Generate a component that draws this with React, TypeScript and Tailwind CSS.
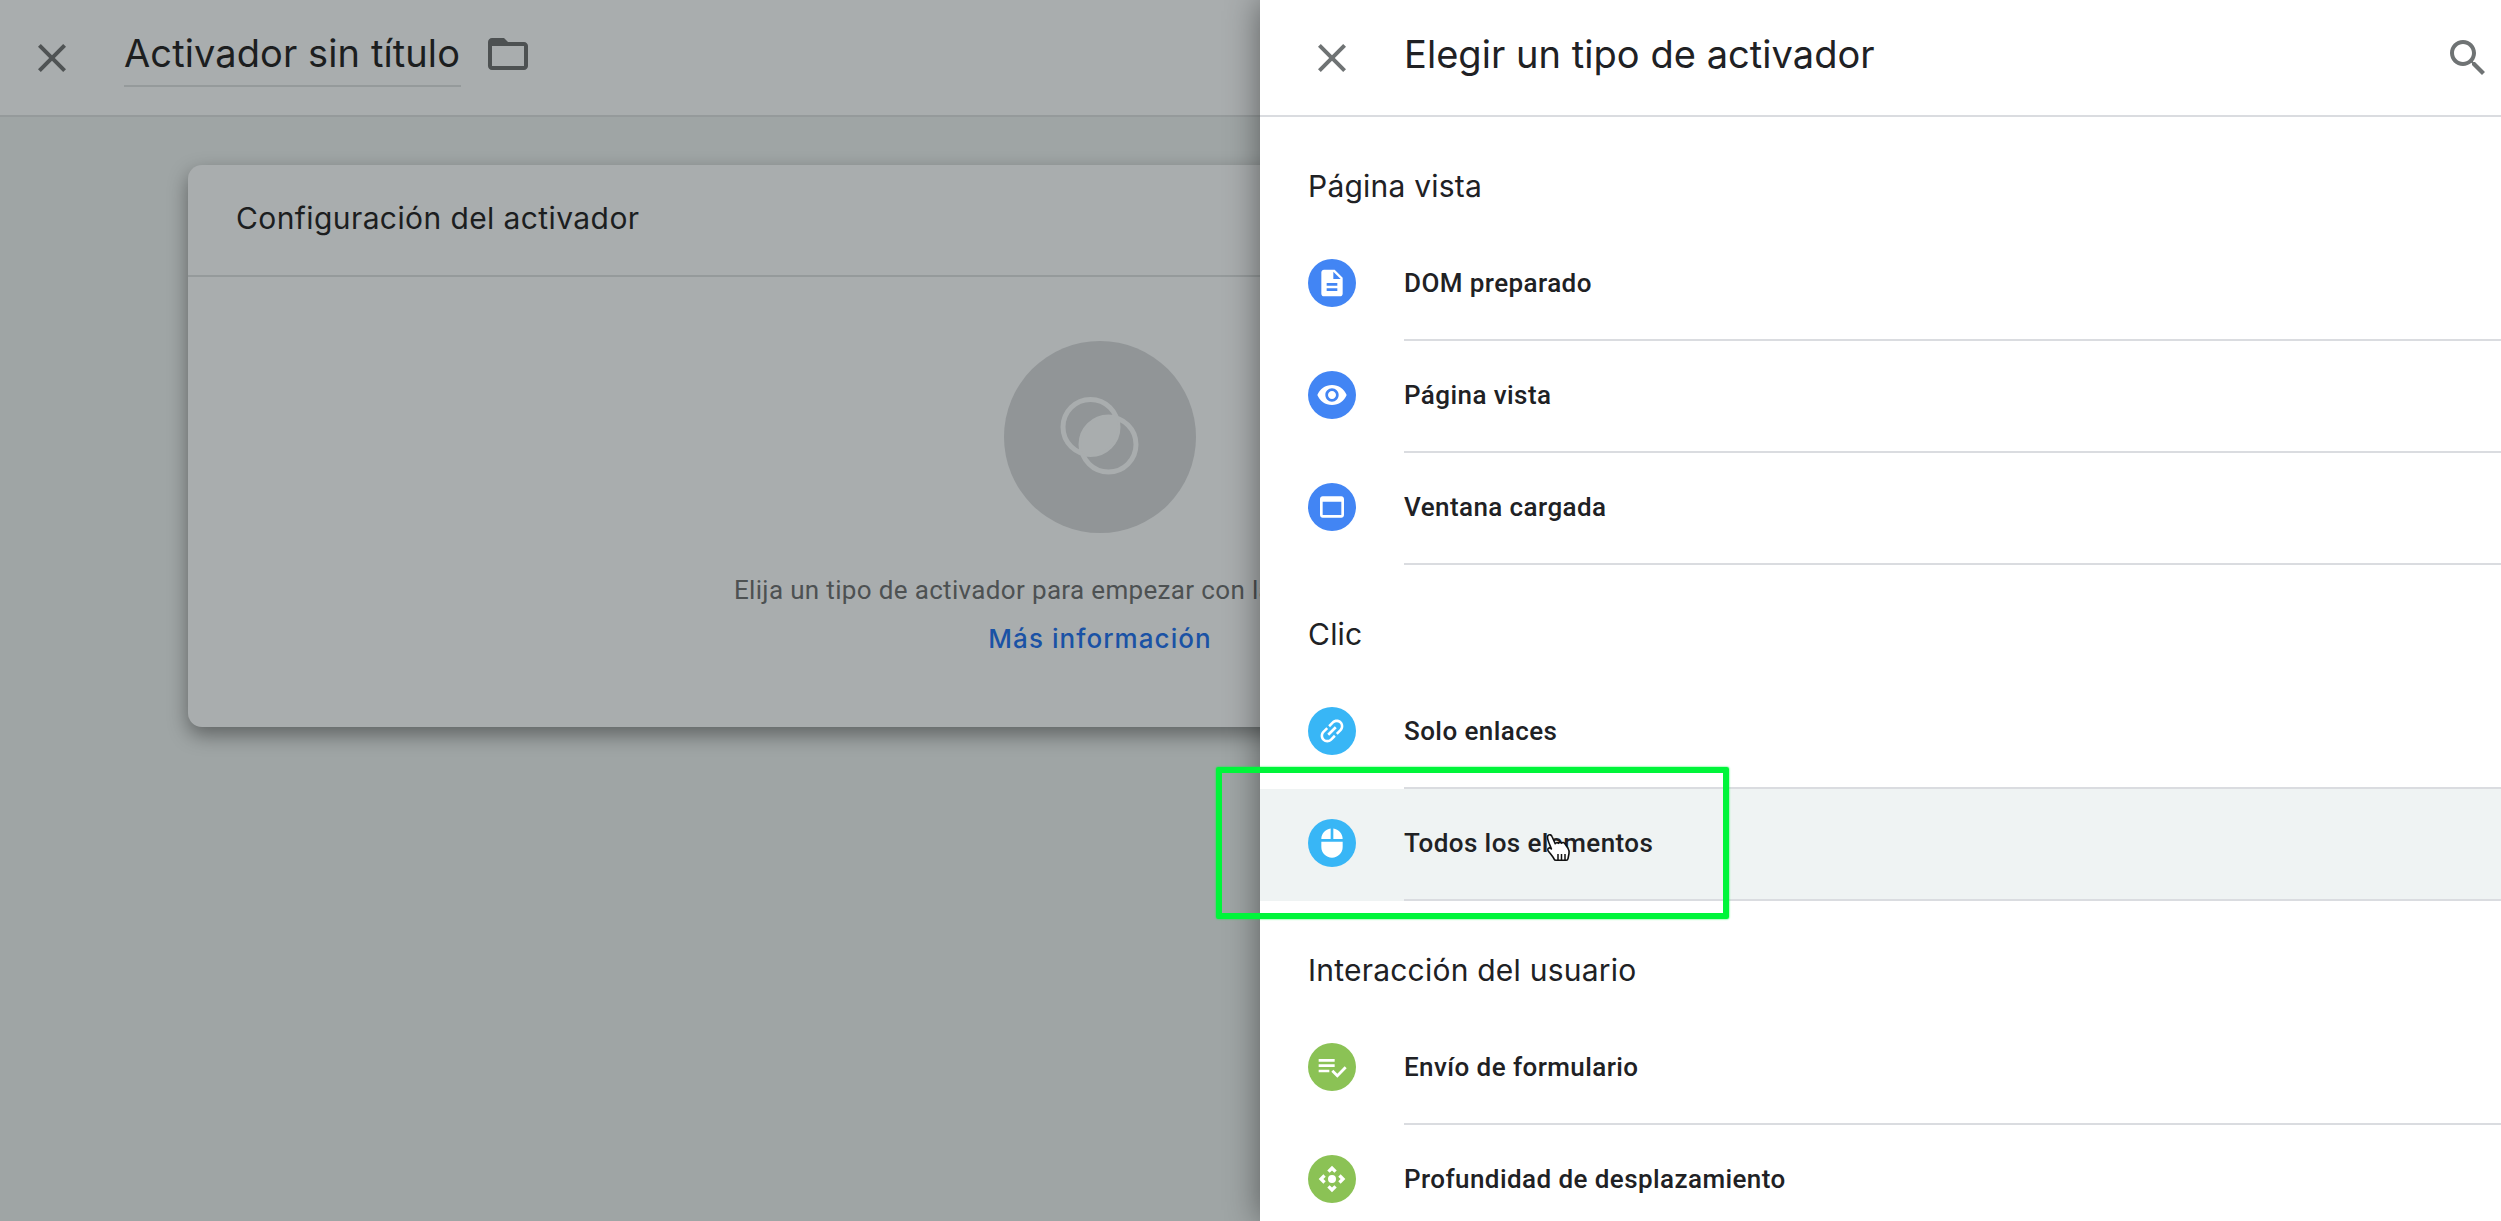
const PATHS = {
  close: "M19 6.41 17.59 5 12 10.59 6.41 5 5 6.41 10.59 12 5 17.59 6.41 19 12 13.41 17.59 19 19 17.59 13.41 12z",
  search: "M15.5 14h-.79l-.28-.27C15.41 12.59 16 11.11 16 9.5 16 5.91 13.09 3 9.5 3S3 5.91 3 9.5 5.91 16 9.5 16c1.61 0 3.09-.59 4.23-1.57l.27.28v.79l5 4.99L20.49 19l-4.99-5zm-6 0C7.01 14 5 11.99 5 9.5S7.01 5 9.5 5 14 7.01 14 9.5 11.99 14 9.5 14z",
  folder: "M20 6h-8l-2-2H4c-1.1 0-1.99.9-1.99 2L2 18c0 1.1.9 2 2 2h16c1.1 0 2-.9 2-2V8c0-1.1-.9-2-2-2zm0 12H4V8h16v10z",
  file: "M14 2H6c-1.1 0-1.99.9-1.99 2L4 20c0 1.1.89 2 1.99 2H18c1.1 0 2-.9 2-2V8l-6-6zm2 16H8v-2h8v2zm0-4H8v-2h8v2zm-3-5V3.5L18.5 9H13z",
  eye: "M12 4.5C7 4.5 2.73 7.61 1 12c1.73 4.39 6 7.5 11 7.5s9.27-3.11 11-7.5c-1.73-4.39-6-7.5-11-7.5zM12 17c-2.76 0-5-2.24-5-5s2.24-5 5-5 5 2.24 5 5-2.24 5-5 5zm0-8c-1.66 0-3 1.34-3 3s1.34 3 3 3 3-1.34 3-3-1.34-3-3-3z",
  web: "M19 4H5c-1.11 0-2 .9-2 2v12c0 1.1.89 2 2 2h14c1.1 0 2-.9 2-2V6c0-1.1-.89-2-2-2zm0 14H5V8h14v10z",
  link: "M3.9 12c0-1.71 1.39-3.1 3.1-3.1h4V7H7c-2.76 0-5 2.24-5 5s2.24 5 5 5h4v-1.9H7c-1.71 0-3.1-1.39-3.1-3.1zM8 13h8v-2H8v2zm9-6h-4v1.9h4c1.71 0 3.1 1.39 3.1 3.1s-1.39 3.1-3.1 3.1h-4V17h4c2.76 0 5-2.24 5-5s-2.24-5-5-5z",
  mouse: "M13 1.07V9h7c0-4.08-3.05-7.44-7-7.93zM4 15c0 4.42 3.58 8 8 8s8-3.58 8-8v-4H4v4zm7-13.93C7.05 1.56 4 4.92 4 9h7V1.07z",
  form: "M14 10H2v2h12v-2zm0-4H2v2h12V6zM2 16h8v-2H2v2zm19.5-4.5L23 13l-6.99 7-4.51-4.5L13 14l3.01 3 5.49-5.5z",
  move: "M15.54 5.54 13.77 7.3 12 5.54 10.23 7.3 8.46 5.54 12 2zm2.92 10-1.76-1.77L18.46 12l-1.76-1.77 1.76-1.77L22 12zm-10 2.92 1.77-1.76L12 18.46l1.77-1.76 1.77 1.76L12 22zm-2.92-10 1.76 1.77L5.54 12l1.76 1.77-1.76 1.77L2 12zM12 9a3 3 0 1 0 0 6 3 3 0 0 0 0-6z",
};

function Icon({ d, className, rotate }: { d: string; className: string; rotate?: boolean }) {
  return (
    <svg viewBox="0 0 24 24" className={className} fill="currentColor">
      <path d={d} transform={rotate ? "rotate(-45 12 12)" : undefined} />
    </svg>
  );
}

function Row({ d, color, label, hover, rotate }: { d: string; color: string; label: string; hover?: boolean; rotate?: boolean }) {
  return (
    <div className={`flex h-[112px] ${hover ? "bg-[#eff3f3]" : ""}`}>
      <div className="flex w-[144px] shrink-0 items-center pb-[4px] pl-[48px]">
        <div className={`flex h-[48px] w-[48px] items-center justify-center rounded-full text-white ${color}`}>
          <Icon d={d} className="h-[32px] w-[32px]" rotate={rotate} />
        </div>
      </div>
      <div className="flex flex-1 items-center border-b-2 border-[#dadce0] pb-[2px]">
        <span className="text-[26px] font-medium leading-[32px] tracking-[0.42px] text-[#202124]">{label}</span>
      </div>
    </div>
  );
}

function Heading({ children }: { children: string }) {
  return (
    <div className="h-[112px] pl-[48px] pt-[49px] font-['Inter',sans-serif] text-[30px] leading-[40px] tracking-[0.22px] text-[#202124]">{children}</div>
  );
}

export default function App() {
  return (
    <div className="relative h-[1221px] w-[2501px] overflow-hidden bg-[#9fa5a5] font-['Roboto',sans-serif]">
      <header className="flex h-[117px] items-center border-b-2 border-[#959a9b] bg-[#a9adae] pl-[28px]">
        <Icon d={PATHS.close} className="h-[48px] w-[48px] text-[#4f5354]" />
        <div className="ml-[48px] mt-[2px] flex h-[56px] w-[337px] items-center border-b-2 border-[#959a9b]">
          <span className="pb-[10px] font-['Inter',sans-serif] text-[38px] leading-[48px] tracking-[0.1px] text-[#1c1e1f]">Activador sin título</span>
        </div>
        <Icon d={PATHS.folder} className="mb-[7px] ml-[23px] h-[48px] w-[48px] text-[#4d5152]" />
      </header>

      <main className="pl-[188px] pt-[48px]">
        <section className="h-[562px] w-[1824px] rounded-[14px] bg-[#a9adae] shadow-[0_8px_20px_rgba(0,0,0,0.4)]">
          <div className="flex h-[112px] items-center border-b-2 border-[#959a9b] pb-[4px] pl-[48px] font-['Inter',sans-serif] text-[30px] leading-[40px] tracking-[0.4px] text-[#1c1e1f]">
            Configuración del activador
          </div>
          <div className="flex flex-col items-center pt-[64px]">
            <div className="flex h-[192px] w-[192px] items-center justify-center rounded-full bg-[#919597]">
              <svg viewBox="0 0 80 80" className="h-[80px] w-[80px]" fill="none">
                <defs>
                  <clipPath id="lens">
                    <circle cx="30.5" cy="30" r="27.5" />
                  </clipPath>
                </defs>
                <circle cx="30.5" cy="30" r="27.5" stroke="#a9adae" strokeWidth="5" />
                <circle cx="48.5" cy="47.5" r="27.5" stroke="#a9adae" strokeWidth="5" />
                <circle cx="48.5" cy="47.5" r="27.5" fill="#a9adae" clipPath="url(#lens)" />
              </svg>
            </div>
            <p className="mt-[41px] whitespace-nowrap pr-[16px] text-[26px] leading-[32px] tracking-[0.34px] text-[#4d5152]">
              Elija un tipo de activador para empezar con la configuración.
            </p>
            <a className="mt-[17px] font-['Inter',sans-serif] text-[26px] font-medium leading-[32px] tracking-[1.05px] text-[#1a52a5]">Más información</a>
          </div>
        </section>
      </main>

      <aside className="absolute bottom-0 right-0 top-0 w-[1241px] overflow-hidden bg-white shadow-[0_0_32px_rgba(0,0,0,0.45)]">
        <div className="flex h-[117px] items-center border-b-2 border-[#dadce0] pl-[48px] pr-[9px]">
          <Icon d={PATHS.close} className="h-[48px] w-[48px] text-[#6f7374]" />
          <span className="ml-[48px] flex-1 pb-[8px] font-['Inter',sans-serif] text-[38px] leading-[48px] tracking-[0.05px] text-[#202124]">Elegir un tipo de activador</span>
          <Icon d={PATHS.search} className="h-[48px] w-[48px] text-[#6f7374]" />
        </div>
        <Heading>Página vista</Heading>
        <Row d={PATHS.file} color="bg-[#4285f4]" label="DOM preparado" />
        <Row d={PATHS.eye} color="bg-[#4285f4]" label="Página vista" />
        <Row d={PATHS.web} color="bg-[#4285f4]" label="Ventana cargada" />
        <Heading>Clic</Heading>
        <Row d={PATHS.link} color="bg-[#38b6f6]" label="Solo enlaces" rotate />
        <Row d={PATHS.mouse} color="bg-[#38b6f6]" label="Todos los elementos" hover />
        <Heading>Interacción del usuario</Heading>
        <Row d={PATHS.form} color="bg-[#8bc255]" label="Envío de formulario" />
        <Row d={PATHS.move} color="bg-[#8bc255]" label="Profundidad de desplazamiento" />
      </aside>

      {/* annotation box drawn over the screenshot */}
      <div className="pointer-events-none absolute left-[1216px] top-[767px] h-[152px] w-[513px] rounded-[2px] border-[6px] border-[#00f53a] shadow-[0_0_2px_#00f53a]" />

      {/* hand cursor */}
      <svg viewBox="0 0 30 34" className="pointer-events-none absolute left-[1543px] top-[832px] h-[34px] w-[30px]">
        <path
          d="M5 3.5c1.5-1.4 3.4-.6 4 1l3.2 7.2c.6-1.2 2.2-1.4 3.2-.4.6-1 2.2-1.2 3.2-.2.8-.8 2.2-.8 3 .2l3.4 5c1 1.6 1.4 3.4 1 5.2l-1 5.2c-.2 1-.8 1.6-1.8 1.6H13c-1 0-1.6-.4-2-1.4-.8-2-3-4.6-5.4-7.4-1-1.2-1-2.6-.2-3.2.8-.6 2-.4 3 .6L6 11C4.8 8 3.8 5 5 3.5z"
          fill="#fff"
          stroke="#111"
          strokeWidth="1.6"
          strokeLinejoin="round"
        />
        <path d="M15 22v6M18.5 22v6M22 22v6" stroke="#111" strokeWidth="1.5" />
      </svg>
    </div>
  );
}
